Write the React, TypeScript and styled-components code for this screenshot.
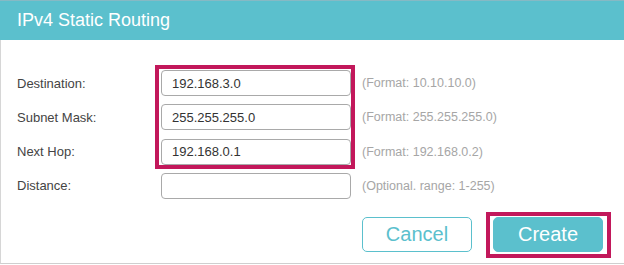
import React from 'react'
import styled, { createGlobalStyle } from 'styled-components'

const GlobalStyle = createGlobalStyle`
  html, body {
    margin: 0;
    padding: 0;
    background: #fff;
  }
  body {
    font-family: "Liberation Sans", Arial, sans-serif;
  }
`

const Dialog = styled.div`
  width: 624px;
  height: 264px;
  display: flex;
  flex-direction: column;
  background: #fff;
`

const Header = styled.div`
  height: 39px;
  border-top: 1px solid #86b9c4;
  background: #5bc0cd;
  color: #fff;
  font-size: 18px;
  display: flex;
  align-items: center;
  padding-left: 17px;
`

const Body = styled.div`
  flex: 1;
  border-left: 1px solid #d6d6d6;
  border-bottom: 1px solid #cfcfcf;
  padding: 30px 0 0 16px;
  display: flex;
  flex-direction: column;
`

const FormGrid = styled.div`
  display: grid;
  grid-template-columns: 144px 190px 1fr;
  grid-auto-rows: 26px;
  row-gap: 8.3px;
  align-items: center;
`

const Label = styled.label<{ $row: number }>`
  grid-column: 1;
  grid-row: ${(p) => p.$row};
  font-size: 13px;
  color: #444;
`

const Input = styled.input<{ $row: number }>`
  grid-column: 2;
  grid-row: ${(p) => p.$row};
  box-sizing: border-box;
  width: 190px;
  height: 26px;
  border: 1px solid #a9a9a9;
  border-radius: 4px;
  padding: 0 10px;
  font-family: "Liberation Sans", Arial, sans-serif;
  font-size: 13px;
  color: #333;
  outline: none;
`

const Hint = styled.span<{ $row: number }>`
  grid-column: 3;
  grid-row: ${(p) => p.$row};
  padding-left: 11px;
  font-size: 12.5px;
  color: #a6a6a6;
`

const InputHighlight = styled.div`
  grid-column: 2;
  grid-row: 1 / 4;
  align-self: stretch;
  margin: -5px -4px -4px -6px;
  border: 4px solid #c2185b;
  pointer-events: none;
`

const Actions = styled.div`
  display: flex;
  justify-content: flex-end;
  align-items: flex-start;
  margin-top: 13px;
  padding-right: 13px;
  gap: 14px;
`

const Button = styled.button<{ $primary?: boolean }>`
  box-sizing: border-box;
  width: 110px;
  height: 35px;
  border-radius: 5px;
  border: 1px solid #5bc0cd;
  background: ${(p) => (p.$primary ? '#5bc0cd' : '#fff')};
  color: ${(p) => (p.$primary ? '#fff' : '#5bc0cd')};
  font-family: "Liberation Sans", Arial, sans-serif;
  font-size: 20px;
  padding: 0;
  margin-top: 5px;
`

const ButtonHighlight = styled.div`
  border: 4px solid #c2185b;
  padding: 1px 4px 2px 3px;
  display: flex;

  & > button {
    margin-top: 0;
  }
`

const rows = [
  { label: 'Destination:', value: '192.168.3.0', hint: '(Format: 10.10.10.0)' },
  { label: 'Subnet Mask:', value: '255.255.255.0', hint: '(Format: 255.255.255.0)' },
  { label: 'Next Hop:', value: '192.168.0.1', hint: '(Format: 192.168.0.2)' },
  { label: 'Distance:', value: '', hint: '(Optional. range: 1-255)' },
]

const App = () => {
  return (
    <>
      <GlobalStyle />
      <Dialog>
        <Header>IPv4 Static Routing</Header>
        <Body>
          <FormGrid>
            {rows.map((r, i) => (
              <React.Fragment key={r.label}>
                <Label $row={i + 1}>{r.label}</Label>
                <Input $row={i + 1} defaultValue={r.value} />
                <Hint $row={i + 1}>{r.hint}</Hint>
              </React.Fragment>
            ))}
            <InputHighlight />
          </FormGrid>
          <Actions>
            <Button>Cancel</Button>
            <ButtonHighlight>
              <Button $primary>Create</Button>
            </ButtonHighlight>
          </Actions>
        </Body>
      </Dialog>
    </>
  )
}

export default App
